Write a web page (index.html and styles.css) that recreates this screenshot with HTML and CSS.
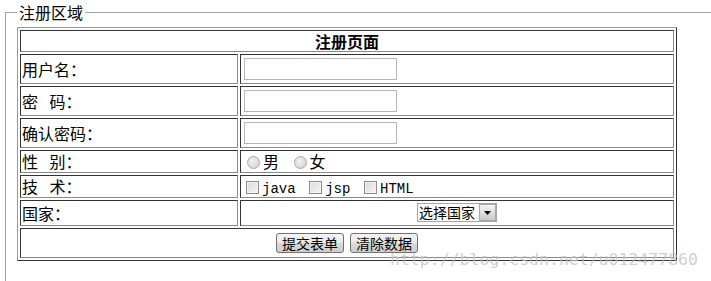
FILE: index.html
```html
<!DOCTYPE html>
<html lang="zh-CN">
<head>
    <meta charset="UTF-8">
    <title>注册页面</title>
    <link rel="stylesheet" href="styles.css">
</head>
<body>
    <fieldset class="reg-area">
        <legend>注册区域</legend>
        <form>
            <table class="reg-table">
                <tr>
                    <th colspan="2">注册页面</th>
                </tr>
                <tr class="row-input">
                    <td class="key">用户名：</td>
                    <td><input type="text" class="text-input"></td>
                </tr>
                <tr class="row-input">
                    <td class="key">密&ensp; 码：</td>
                    <td><input type="password" class="text-input"></td>
                </tr>
                <tr class="row-input">
                    <td class="key">确认密码：</td>
                    <td><input type="password" class="text-input"></td>
                </tr>
                <tr>
                    <td class="key">性&ensp; 别：</td>
                    <td>
                        <label><input type="radio" name="sex" class="radio">男</label>
                        <label class="opt-gap"><input type="radio" name="sex" class="radio">女</label>
                    </td>
                </tr>
                <tr>
                    <td class="key">技&ensp; 术：</td>
                    <td>
                        <label><input type="checkbox" class="check"><span class="en">java</span></label>
                        <label class="opt-gap"><input type="checkbox" class="check"><span class="en">jsp</span></label>
                        <label class="opt-gap"><input type="checkbox" class="check"><span class="en">HTML</span></label>
                    </td>
                </tr>
                <tr>
                    <td class="key">国家：</td>
                    <td class="select-cell">
                        <div class="select-box">
                            <select>
                                <option>选择国家</option>
                                <option>中国</option>
                                <option>美国</option>
                                <option>日本</option>
                            </select>
                            <span class="arrow">
                                <svg width="7" height="4" viewBox="0 0 7 4"><path d="M0 0h7L3.5 4z" fill="#000"/></svg>
                            </span>
                        </div>
                    </td>
                </tr>
                <tr>
                    <td colspan="2" class="actions-cell">
                        <div class="actions">
                            <button type="submit">提交表单</button>
                            <button type="reset">清除数据</button>
                        </div>
                    </td>
                </tr>
            </table>
        </form>
    </fieldset>
    <div class="watermark">http://blog.csdn.net/u012477860</div>
</body>
</html>
```

FILE: styles.css
```css
body {
    margin: 0;
    font-family: "Noto Sans CJK SC", sans-serif;
    font-size: 16px;
    color: #000;
    background: #fff;
    overflow: hidden;
}
.reg-area {
    margin: 3px 0 0 5px;
    padding: 6px 0 24px 11px;
    width: 720px;
    border: 1px solid #a0a0a0;
    box-sizing: border-box;
}
.reg-area legend {
    padding: 0 2px;
    line-height: 18px;
}
.reg-table {
    width: 660px;
    border-collapse: separate;
    border-spacing: 2px;
    border: 1px solid;
    border-color: #9a9a9a #333 #333 #9a9a9a;
}
.reg-table th,
.reg-table td {
    border: 1px solid;
    border-color: #333 #8a8a8a #8a8a8a #333;
    padding: 0 1px;
    line-height: 21px;
    text-align: left;
    vertical-align: middle;
}
.reg-table th {
    line-height: 20px;
    text-align: center;
    font-weight: bold;
}
.key {
    width: 214px;
}
.text-input {
    display: block;
    box-sizing: border-box;
    width: 153px;
    height: 22px;
    margin: 3px 2px;
    border: 1px solid #b5b5b5;
    font: inherit;
}
.radio,
.check {
    appearance: none;
    box-sizing: border-box;
    width: 13px;
    height: 13px;
    margin: 0 3px 0 5px;
    vertical-align: -1px;
}
.radio {
    border: 1px solid #a8a8a8;
    border-radius: 50%;
    background: radial-gradient(circle at 40% 40%, #f2f2f2, #cfcfcf);
}
.check {
    margin-left: 4px;
    border: 1px solid #8c8c8c;
    background: linear-gradient(135deg, #d8d8d8, #f6f6f6);
    box-shadow: inset 0 0 0 1px #f2f2f2;
}
.opt-gap {
    margin-left: 6px;
}
.en {
    font-family: "Liberation Mono", monospace;
    font-size: 14px;
    line-height: 1;
}
.reg-table td.select-cell {
    padding: 2px 1px 3px;
}
.select-box {
    position: relative;
    width: 80px;
    height: 19px;
    margin: 0 auto;
}
.select-box select {
    appearance: none;
    box-sizing: border-box;
    display: block;
    width: 80px;
    height: 19px;
    padding: 0 18px 0 1px;
    border: 1px solid #a5a5a5;
    background: #fff;
    font-family: "Noto Sans CJK SC", sans-serif;
    font-size: 14px;
    line-height: 17px;
    color: #000;
}
.arrow {
    position: absolute;
    right: 1px;
    top: 1px;
    width: 17px;
    height: 17px;
    box-sizing: border-box;
    border: 1px solid #a8a8a8;
    background: linear-gradient(#f6f6f6, #c9c9c9);
    display: flex;
    align-items: center;
    justify-content: center;
    pointer-events: none;
}
.reg-table td.actions-cell {
    padding: 4px 1px 4px;
}
.actions {
    display: flex;
    justify-content: center;
    gap: 6px;
}
.actions button {
    height: 20px;
    padding: 0 5px;
    border: 1px solid #707070;
    border-radius: 3px;
    background: linear-gradient(#f4f4f4, #e8e8e8 50%, #d9d9d9 51%, #cdcdcd);
    font-family: "Noto Sans CJK SC", sans-serif;
    font-size: 14px;
    line-height: 16px;
    color: #000;
}
.watermark {
    position: absolute;
    left: 390px;
    top: 250px;
    font-family: "DejaVu Sans Mono", monospace;
    font-size: 16.5px;
    color: rgba(190, 190, 190, 0.75);
    white-space: nowrap;
}
```
